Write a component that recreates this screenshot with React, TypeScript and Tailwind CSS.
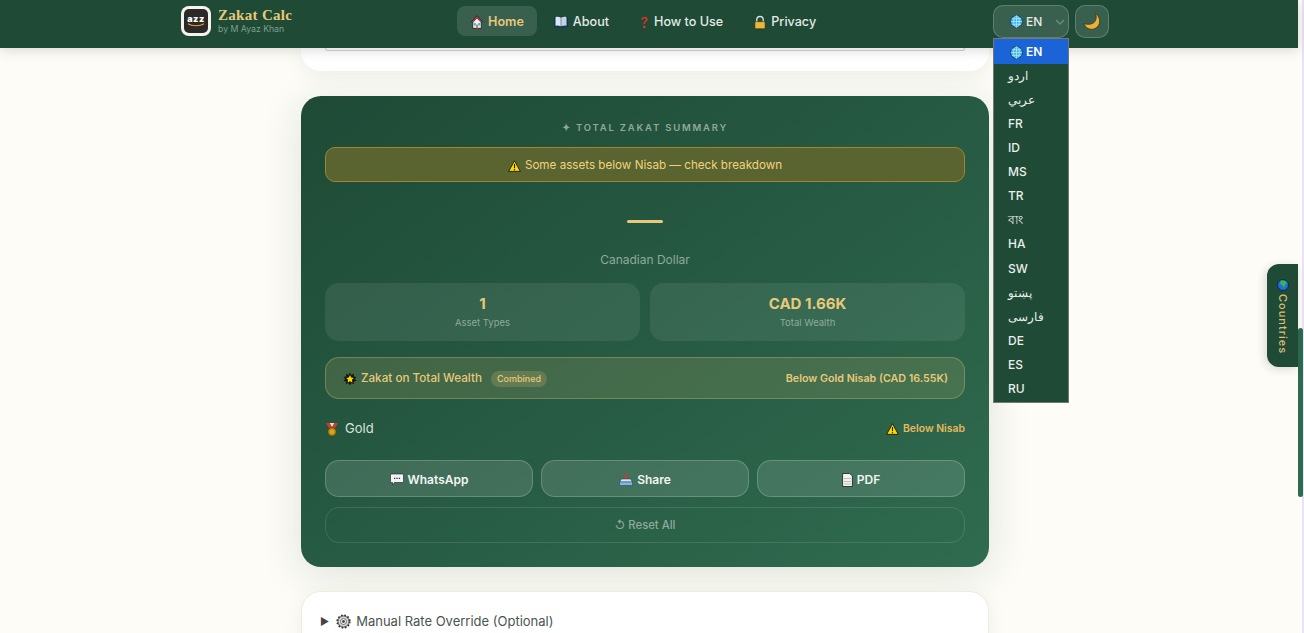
import React from 'react';

const sans = 'font-["Inter","Noto_Sans",sans-serif]';

const HouseIcon = () => (
  <svg width="12" height="14" viewBox="0 0 14 14" preserveAspectRatio="none" className="shrink-0">
    <path d="M7 .8 1 6.6l1 1v5.700h10V7.600l1-1z" fill="#f3efe8" stroke="#111" strokeWidth=".8" />
    <path d="M7 .8 1 6.600l1 1L7 3l5 4.600 1-1z" fill="#c9423b" stroke="#111" strokeWidth=".6" />
    <rect x="3" y="8" width="2.600" height="2.600" fill="#35b7ef" />
    <rect x="8.400" y="8" width="2.600" height="2.600" fill="#35b7ef" />
    <rect x="5.900" y="9.500" width="2.200" height="3.800" fill="#ef6a4d" />
  </svg>
);

const BookIcon = () => (
  <svg width="14" height="12" viewBox="0 0 15 13" className="shrink-0">
    <path d="M.6 1.400h13.800v10.400H.6z" fill="#1d4f86" stroke="#0c2340" strokeWidth=".7" />
    <path d="M1.600 1c2-.5 4-.3 5.600.6v9.600c-1.600-.8-3.600-1-5.600-.6z" fill="#dfe6ef" />
    <path d="M13.400 1c-2-.5-4-.3-5.600.6v9.600c1.600-.8 3.600-1 5.600-.6z" fill="#c9d3df" />
  </svg>
);

const QuestionIcon = () => (
  <svg width="9" height="15" viewBox="0 0 10 15" className="shrink-0">
    <path d="M1.500 4.400C1.600 2.300 3 1 5.100 1c2.200 0 3.500 1.300 3.500 3 0 1.500-.9 2.200-1.900 3-.8.600-1.100 1-1.100 2.200H3.900c0-1.700.4-2.300 1.200-3 .8-.6 1.200-1 1.200-2 0-.8-.5-1.300-1.300-1.300-.9 0-1.400.6-1.500 1.500z" fill="#d9342b" />
    <circle cx="4.700" cy="12.400" r="1.500" fill="#d9342b" />
  </svg>
);

const LockIcon = () => (
  <svg width="12" height="15" viewBox="0 0 13 15" className="shrink-0">
    <path d="M3 7V4.500a3.500 3.500 0 0 1 7 0V7" fill="none" stroke="#d9dde2" strokeWidth="1.500" />
    <rect x="1" y="6.600" width="11" height="7.600" rx="1" fill="#e9b93c" stroke="#4a3a10" strokeWidth=".7" />
  </svg>
);

const GlobeIcon = () => (
  <svg width="13" height="13" viewBox="0 0 12 12" className="shrink-0">
    <circle cx="6" cy="6" r="5.500" fill="#3fb6ea" stroke="#103a55" strokeWidth=".8" />
    <path d="M.8 6h10.400M6 .6v10.800M1.600 3.400h8.800M1.600 8.600h8.800" stroke="#c5ecfb" strokeWidth=".6" fill="none" />
    <ellipse cx="6" cy="6" rx="2.600" ry="5.300" stroke="#c5ecfb" strokeWidth=".6" fill="none" />
  </svg>
);

const EarthIcon = () => (
  <svg width="12" height="12" viewBox="0 0 12 12" className="shrink-0">
    <circle cx="6" cy="6" r="5.500" fill="#1f6fd6" stroke="#0a2340" strokeWidth=".8" />
    <path d="M3.800 1.600c2.200-.6 5 .2 6 1.800.3 1-.9 1.100-1.400 2.200-.4 1-1 2.800-1.800 3.200C5.900 8 6.200 6.500 5 6 3.800 5.500 3 4.800 3.200 3.600z" fill="#39b54a" />
  </svg>
);

const MoonIcon = () => (
  <svg width="18" height="17" viewBox="0 0 18 17">
    <path d="M12.500.6c1.300 3.600.9 6.600-1.200 8.700-2.200 2-5.500 2.500-10.500 1.500 1.600 3.500 4.400 5.500 7.700 5.500 4.200 0 7.800-3.200 8.100-7.600.2-3.400-1.400-6.300-4.100-8.100z" fill="#e9b23a" stroke="#3a2c08" strokeWidth=".7" />
  </svg>
);

const WarningIcon = () => (
  <svg width="13" height="12" viewBox="0 0 13 12" className="shrink-0">
    <path d="M6.500.8 12.400 11.400H.6z" fill="#fbd800" stroke="#1c1a08" strokeWidth=".9" strokeLinejoin="round" />
    <path d="M6.500 4v4.200" stroke="#1c1a08" strokeWidth="1.100" />
    <circle cx="6.500" cy="9.700" r=".7" fill="#1c1a08" />
  </svg>
);

const StarIcon = () => (
  <svg width="14" height="14" viewBox="0 0 14 14" className="shrink-0">
    <path d="m7 .5 1.400 2.400L11 1.800l-.3 2.700 2.800.5-1.800 2 1.800 2-2.800.5.300 2.700-2.600-1.100L7 13.500l-1.400-2.400L3 12.200l.3-2.700L.5 9l1.800-2-1.800-2 2.800-.5L3 1.800l2.600 1.100z" fill="#15160f" />
    <path d="m7 3 1.200 2.500 2.700.4-2 1.900.5 2.700L7 9.200l-2.400 1.300.5-2.700-2-1.900 2.700-.4z" fill="#fbd800" />
  </svg>
);

const MedalIcon = () => (
  <svg width="14" height="15" viewBox="0 0 15 15" className="shrink-0">
    <path d="M1 .5h4.200l2.300 4 2.300-4H14L9.800 7.500H5.200z" fill="#c63d33" />
    <path d="M5 .5h5l-2.500 4.300z" fill="#e9dcc0" />
    <circle cx="7.500" cy="10" r="4.500" fill="#b98a12" stroke="#4d3905" strokeWidth=".7" />
    <circle cx="7.500" cy="10" r="2.400" fill="#d3a71f" />
  </svg>
);

const ChatIcon = () => (
  <svg width="14" height="13" viewBox="0 0 14 13" className="shrink-0">
    <path d="M1.500 1h11a1 1 0 0 1 1 1v6.500a1 1 0 0 1-1 1H4.500L2.500 12V9.500h-1a1 1 0 0 1-1-1V2a1 1 0 0 1 1-1z" fill="#f1f3f4" stroke="#1b1b1b" strokeWidth=".6" />
    <path d="M4 5.300h1.300M6.400 5.300h1.300M8.800 5.300h1.300" stroke="#333" strokeWidth="1.300" />
  </svg>
);

const TrayIcon = () => (
  <svg width="14" height="13" viewBox="0 0 14 13" className="shrink-0">
    <path d="M7 .5 9.400 4H8v2.500H6V4H4.600z" fill="#d3362d" />
    <path d="M2.500 6h9L13.500 9H.5z" fill="#cfe6f5" stroke="#1f3a55" strokeWidth=".5" />
    <path d="M.5 9h13v3.500H.5z" fill="#7fb9e2" stroke="#1f3a55" strokeWidth=".5" />
  </svg>
);

const PageIcon = () => (
  <svg width="11" height="14" viewBox="0 0 11 14" className="shrink-0">
    <path d="M.6.500H7.800L10.400 3v10.500H.6z" fill="#f2f2f2" stroke="#1b1b1b" strokeWidth=".8" />
    <path d="M2 5h7v1H2zM2 8h7v1H2zM2 10.500h7v1H2z" fill="#bdbdbd" />
  </svg>
);

const GearIcon = () => (
  <svg width="15" height="15" viewBox="0 0 15 15" className="block shrink-0">
    <circle cx="7.500" cy="7.500" r="5.600" fill="#d8d8d8" stroke="#222" strokeWidth=".8" />
    <circle cx="7.500" cy="7.500" r="6.300" fill="none" stroke="#333" strokeWidth="1.600" strokeDasharray="1.700 1.600" />
    <circle cx="7.500" cy="7.500" r="3" fill="#f4f4f4" stroke="#444" strokeWidth=".7" />
    <circle cx="7.500" cy="7.500" r="1.400" fill="#444" />
  </svg>
);

const Logo = () => (
  <div className="flex h-[30px] w-[30px] shrink-0 items-center justify-center rounded-lg bg-[#f6f3ee]">
    <div className="flex h-[24px] w-[24px] flex-col items-center justify-center rounded-[5px] bg-[#2b2a28]">
      <span className="text-[9px] font-black leading-[8px] tracking-[.5px] text-white">azz</span>
      <svg width="18" height="4" viewBox="0 0 18 4">
        <path d="M1 .8c4 2.600 12 2.600 16 0" fill="none" stroke="#f0a02c" strokeWidth="1.100" />
      </svg>
    </div>
  </div>
);

const navItems = [
  { label: 'About', icon: <BookIcon /> },
  { label: 'How to Use', icon: <QuestionIcon /> },
  { label: 'Privacy', icon: <LockIcon /> },
];

const languages = ['اردو', 'عربي', 'FR', 'ID', 'MS', 'TR', 'বাং', 'HA', 'SW', 'پښتو', 'فارسی', 'DE', 'ES', 'RU'];

const Header = () => (
  <header className="relative z-20 h-[48px] w-[1298px] shrink-0 bg-[#1e4a36] shadow-[0_2px_12px_rgba(0,0,0,0.15)]">
    <div className="ml-[181px] flex h-[42px] w-[928px] items-center">
      <div className="flex w-[276px] items-center gap-[7px]">
        <Logo />
        <div>
          <div className='font-["Liberation_Serif",serif] text-[15px] font-bold leading-[17px] tracking-[.3px] text-[#e8c97a]'>Zakat Calc</div>
          <div className="text-[8.7px] leading-[11px] text-[#7fa08f]">by M Ayaz Khan</div>
        </div>
      </div>
      <nav className="flex items-center gap-[3px] text-[12.6px] font-medium text-[#e4ebe6]">
        <a className="flex h-[30px] items-center gap-[5px] rounded-lg bg-white/12 pl-[14px] pr-[13px] pt-[2px] font-semibold text-[#e8c97a]">
          <HouseIcon />
          Home
        </a>
        {navItems.map((item) => (
          <a key={item.label} className="flex h-[30px] items-center gap-[5px] px-[14px] pt-[2px]">
            {item.icon}
            {item.label}
          </a>
        ))}
      </nav>
      <div className="relative ml-auto flex w-[116px] items-center justify-end gap-[6px]">
        <div className="flex h-[33px] w-[76px] items-center rounded-[10px] border border-white/20 bg-white/12 pl-[16px] pt-[1px] text-[12px] font-medium text-[#e4ebe6]">
          <GlobeIcon />
          <span className="ml-[3px]">EN</span>
          <svg width="10" height="6" viewBox="0 0 10 6" className="ml-auto mr-[3px]">
            <path d="m1 1 4 4 4-4" fill="none" stroke="#6f8a7d" strokeWidth="1.300" />
          </svg>
        </div>
        <button className="flex h-[33px] w-[34px] items-center justify-center rounded-[10px] border border-white/20 bg-white/12">
          <MoonIcon />
        </button>
        <div className="absolute left-0 top-[33.5px] w-[76px] border border-[#767676] bg-[#1e4a36] pb-[1px] text-[12px] font-medium text-[#e9efeb]">
          <div className="flex h-[25px] items-center bg-[#1a64d8] pl-[16px] pt-[1px] text-white">
            <GlobeIcon />
            <span className="ml-[3px] font-semibold">EN</span>
          </div>
          {languages.map((lang) => (
            <div key={lang} className="flex h-[24.07px] items-center pl-[14px]">{lang}</div>
          ))}
        </div>
      </div>
    </div>
  </header>
);

const SummaryCard = () => (
  <section className="mt-[25px] rounded-[20px] bg-linear-to-br from-[#1e4a36] to-[#2f6b4f] p-[24px] shadow-[0_8px_40px_rgba(30,74,54,0.14)]">
    <div className="mt-[1px] text-center text-[9.5px] font-semibold leading-[14px] tracking-[1.8px] text-[#8fa99c]">✦ TOTAL ZAKAT SUMMARY</div>
    <div className="mt-[12px] flex h-[35px] items-center justify-center gap-[4px] rounded-[10px] border border-[#a5842a] bg-[#5a6430] pt-[2px] text-[11.65px] text-[#f0d27c]">
      <WarningIcon />
      Some assets below Nisab — check breakdown
    </div>
    <div className="mx-auto mt-[38px] h-[3px] w-[36px] rounded-full bg-[#e8c97a]" />
    <div className="mt-[27px] text-center text-[12px] leading-[20px] text-[#8fa99c]">Canadian Dollar</div>
    <div className="mt-[13px] grid grid-cols-2 gap-[10px]">
      <div className="flex h-[58px] flex-col items-center justify-center rounded-[14px] bg-white/8">
        <div className="text-[15px] font-bold leading-[20px] text-[#e8c97a]">1</div>
        <div className="mt-[2px] text-[9.5px] leading-[14px] text-[#8fa99c]">Asset Types</div>
      </div>
      <div className="flex h-[58px] flex-col items-center justify-center rounded-[14px] bg-white/8">
        <div className="text-[15px] font-bold leading-[20px] text-[#e8c97a]">CAD 1.66K</div>
        <div className="mt-[2px] text-[9.5px] leading-[14px] text-[#8fa99c]">Total Wealth</div>
      </div>
    </div>
    <div className="mt-[16px] flex h-[42px] items-center justify-between rounded-[14px] border border-[#e8c97a]/30 bg-[#e8c97a]/15 pl-[17px] pr-[16px] pt-[2px] text-[#e8c97a]">
      <div className="flex items-center">
        <StarIcon />
        <span className="ml-[4px] text-[11.7px] font-medium">Zakat on Total Wealth</span>
        <span className="ml-[9px] rounded-full bg-[#e8c97a]/20 px-[6px] py-[1px] text-[9px] font-medium">Combined</span>
      </div>
      <div className="text-[10.7px] font-semibold">Below Gold Nisab (CAD 16.55K)</div>
    </div>
    <div className="mt-[18px] flex h-[22px] items-center justify-between pt-[2px]">
      <div className="flex items-center gap-[6px] text-[13px] text-[#d9e3dd]">
        <MedalIcon />
        Gold
      </div>
      <div className="flex items-center gap-[4px] text-[10.4px] font-semibold text-[#e5b95c]">
        <WarningIcon />
        Below Nisab
      </div>
    </div>
    <div className="mt-[21px] grid grid-cols-3 gap-[8px] text-[12px] font-semibold text-[#f2f5f3]">
      <button className="flex h-[37px] items-center justify-center gap-[4px] rounded-[14px] border border-white/20 bg-white/12 pt-[2px]"><ChatIcon />WhatsApp</button>
      <button className="flex h-[37px] items-center justify-center gap-[4px] rounded-[14px] border border-white/20 bg-white/12 pt-[2px]"><TrayIcon />Share</button>
      <button className="flex h-[37px] items-center justify-center gap-[4px] rounded-[14px] border border-white/20 bg-white/12 pt-[2px]"><PageIcon />PDF</button>
    </div>
    <button className="mt-[10px] flex h-[36px] w-full items-center justify-center rounded-[14px] border border-white/12 text-[11.3px] font-medium text-[#8fa99c]">↺ Reset All</button>
  </section>
);

const App: React.FC = () => (
  <div className={`${sans} relative flex h-[633px] w-[1304px] flex-col overflow-hidden bg-[#fdfcf6]`}>
    <Header />
    <main className="ml-[301px] w-[688px]">
      <div className="h-[23px] rounded-b-[20px] bg-white px-[24px] shadow-[0_4px_20px_rgba(30,74,54,0.08)]">
        <div className="h-[3px] rounded-b-[10px] border border-t-0 border-[#d9cdc9]" />
      </div>
      <SummaryCard />
      <section className="mt-[24px] h-[60px] rounded-t-[20px] border border-[#f0ecd8] bg-white px-[18px] pt-[20px] shadow-[0_4px_20px_rgba(30,74,54,0.06)]">
        <div className="flex items-center text-[13px] text-[#4a5550]">
          <span className="text-[10px] text-[#444]">▶</span>
          <span className="ml-[7px]"><GearIcon /></span>
          <span className="ml-[5px]">Manual Rate Override (Optional)</span>
        </div>
      </section>
    </main>
    <aside className="absolute right-[6px] top-[264px] z-10 flex h-[103px] w-[31px] flex-col items-center rounded-l-[12px] bg-[#1e4a36] pt-[15px] shadow-[-2px_2px_10px_rgba(0,0,0,0.15)]">
      <EarthIcon />
      <span className="mt-[3px] text-[11px] font-medium tracking-[1px] text-[#d9bd74] [writing-mode:vertical-rl]">Countries</span>
    </aside>
    <div className="absolute right-0 top-0 h-full w-[2px] bg-[#e8e2f6]" />
    <div className="absolute right-[1px] top-[328px] h-[169px] w-[5px] rounded-full bg-[#2d6a4f]" />
  </div>
);

export default App;
